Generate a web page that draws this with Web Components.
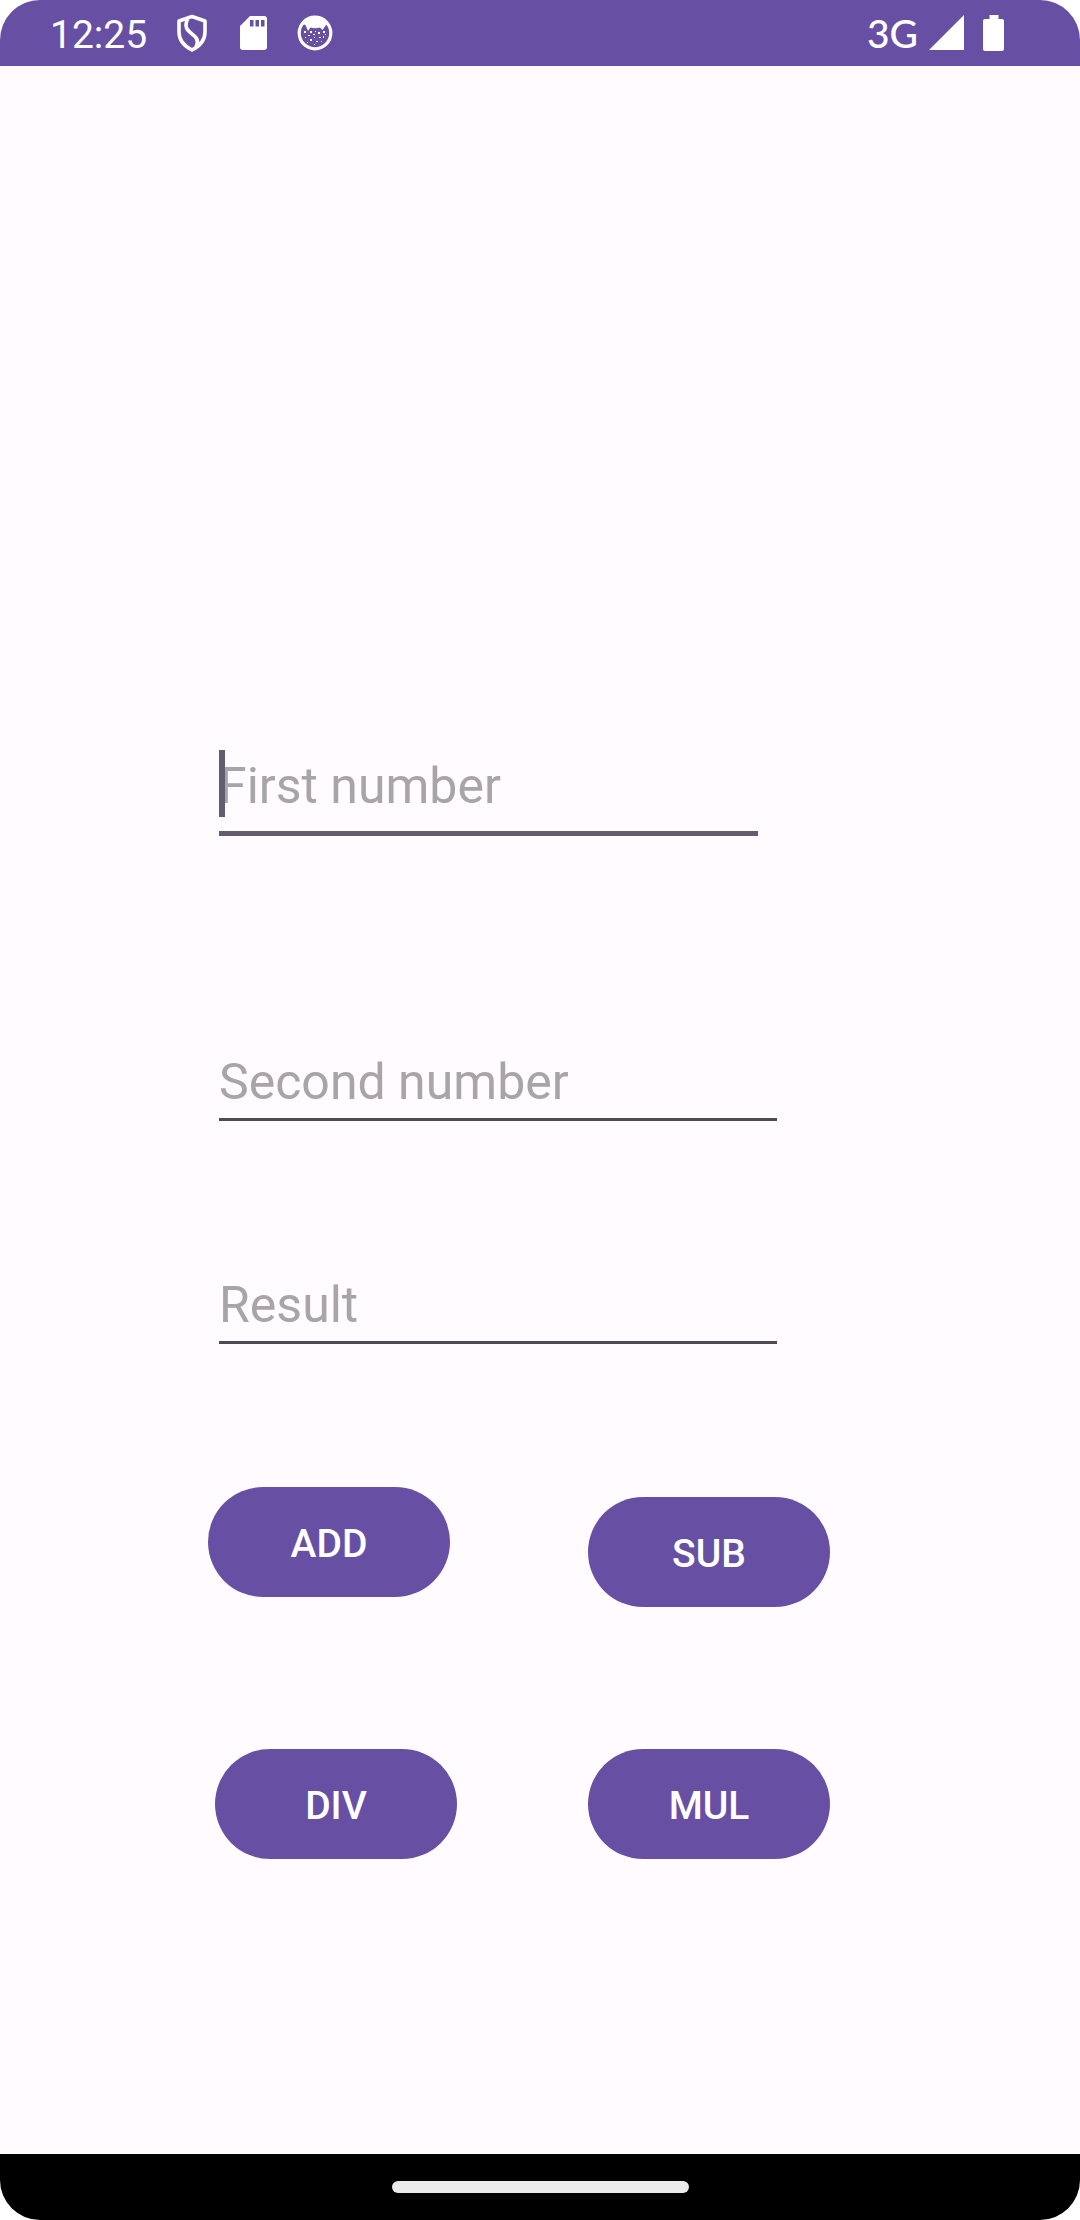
<!DOCTYPE html>
<html lang="en">
<head>
<meta charset="utf-8">
<meta name="viewport" content="width=device-width, initial-scale=1">
<title>Calculator</title>
<style>
  html { background: #fff; }
  body { margin: 0; font-family: Roboto, "Noto Sans", sans-serif; }
</style>
</head>
<body>
<calc-app></calc-app>

<script>
class StatusBar extends HTMLElement {
  constructor() {
    super();
    this.attachShadow({ mode: 'open' }).innerHTML = `
      <style>
        :host { display: flex; justify-content: space-between; align-items: center; height: 66px;
                box-sizing: border-box; padding: 0 76px 0 50px; background: #6750a4; color: #fff;
                font-size: 39px; line-height: 48px; }
        .group { display: flex; align-items: center; }
        svg { display: block; }
        .left svg { margin-left: 28px; }
        .time { padding-top: 4px; }
        .network { font-family: Lato, sans-serif; font-weight: 500; margin-right: 11px; }
        .right { margin-right: -2px; }
        .battery { margin-left: 18px; }
      </style>
      <div class="group left">
        <span class="time">12:25</span>
        <svg width="34" height="38" viewBox="0 0 34 38" fill="none" stroke="#fff" stroke-width="3.6" stroke-linejoin="round">
          <path d="M17 2.5 30 7v11c0 8-5 14-13 18C9 32 4 26 4 18V7Z"/>
          <path d="M12.500 5C9 13 12 16 17 20c6 4 7 8 4 13"/>
        </svg>
        <svg width="31" height="38" viewBox="0 0 31 38">
          <path fill="#fff" fill-rule="evenodd" d="M13 2h14q3 0 3 3v28q0 3-3 3H6q-3 0-3-3V12ZM13 6v6.500h3.500V6Zm5.500 0v6.500H22V6Zm5.500 0v6.500h3.500V6Z"/>
        </svg>
        <svg width="38" height="38" viewBox="0 0 38 38">
          <circle cx="19" cy="19" r="15.800" fill="none" stroke="#fff" stroke-width="3.200"/>
          <path fill="#fff" d="M6 10Q19-4 32 10L30 11 26.500 16 24 13.500Q19 15 14.500 13.500L12 17 9.500 11Z"/>
          <path fill="#fff" d="M8 17h2v2H8zM14 17h2v2h-2zM17 20h2v1h-2zM22 18h2v2h-2zM27 17h2v2h-2zM9 23h1v1H9zM12 21h2v1h-2zM14 25h2v2h-2zM18 23h1v1h-1zM20 27h2v1h-2zM23 23h2v1h-2zM27 22h1v2h-1zM25 27h1v1h-1zM18 30h1v1h-1zM11 28h1v1h-1zM29 20h1v1h-1zM19 17h1v1h-1z"/>
        </svg>
      </div>
      <div class="group right">
        <span class="network">3G</span>
        <svg width="35" height="36" viewBox="0 0 35 36"><path fill="#fff" d="M35 0v35H0Z"/></svg>
        <svg class="battery" width="24" height="38" viewBox="0 0 24 38">
          <path fill="#fff" d="M7.500 1h9v4H20q2 0 2 2v28q0 2-2 2H3q-2 0-2-2V7q0-2 2-2h4.500Z"/>
        </svg>
      </div>`;
  }
}
customElements.define('status-bar', StatusBar);

class NumberField extends HTMLElement {
  constructor() {
    super();
    this.attachShadow({ mode: 'open' }).innerHTML = `
      <style>
        :host { display: block; position: relative; box-sizing: border-box; width: 100%; max-width: 580px; padding: 0 11px; }
        :host([active]) { max-width: 561px; }
        input { display: block; box-sizing: content-box; width: 100%; height: 60px; margin: 0;
                padding: 0 0 6px; border: 0; border-bottom: 3px solid #4f4a58; border-radius: 0;
                outline: 0; background: none; color: #1c1b1f; caret-color: #625b71;
                font: 400 50px/60px Roboto, "Noto Sans", sans-serif; }
        input::placeholder { color: #a7a5a9; opacity: 1; }
        :host([active]) input { padding-bottom: 15px; border-bottom: 5px solid #625b71; }
        .cursor { display: none; position: absolute; left: 11px; top: -6px; width: 6px; height: 67px;
                  background: #625b71; pointer-events: none; }
        :host([active]) .cursor { display: block; }
      </style>
      <input type="text" inputmode="numeric">
      <span class="cursor"></span>`;
  }
  connectedCallback() {
    const input = this.shadowRoot.querySelector('input');
    input.placeholder = this.getAttribute('hint');
    input.setAttribute('aria-label', this.getAttribute('hint'));
  }
}
customElements.define('number-field', NumberField);

class PillButton extends HTMLElement {
  constructor() {
    super();
    this.attachShadow({ mode: 'open' }).innerHTML = `
      <style>
        :host { display: block; }
        button { display: block; width: 242px; height: 110px; margin: 0; padding: 4px 0 0; border: 0;
                 border-radius: 55px; background: #6750a4; color: #fff; cursor: pointer;
                 font: 500 39px/48px Roboto, "Noto Sans", sans-serif; }
      </style>
      <button type="button"><slot></slot></button>`;
  }
}
customElements.define('pill-button', PillButton);

class NavBar extends HTMLElement {
  constructor() {
    super();
    this.attachShadow({ mode: 'open' }).innerHTML = `
      <style>
        :host { display: flex; align-items: center; justify-content: center; height: 66px; background: #000; }
        div { width: 297px; height: 12px; border-radius: 6px; background: #ebebeb; }
      </style>
      <div></div>`;
  }
}
customElements.define('nav-bar', NavBar);

class CalcApp extends HTMLElement {
  constructor() {
    super();
    this.attachShadow({ mode: 'open' }).innerHTML = `
      <style>
        :host { display: flex; flex-direction: column; min-height: 100vh; overflow: hidden;
                border-radius: 40px; background: #fffbfe; }
        main { flex: 1; padding: 690px 250px 142px 208px; }
        .fields { display: flex; flex-direction: column; gap: 154px; margin-bottom: 143px; }
        .first { margin-bottom: 62px; }
        .keys { display: flex; flex-direction: column; gap: 142px; }
        .row { display: flex; justify-content: space-between; align-items: flex-start; }
        .lower { margin-top: 10px; }
        .inset { margin-left: 7px; }
      </style>
      <status-bar></status-bar>
      <main>
        <div class="fields">
          <number-field class="first" hint="First number" active></number-field>
          <number-field hint="Second number"></number-field>
          <number-field hint="Result"></number-field>
        </div>
        <div class="keys">
          <div class="row">
            <pill-button>ADD</pill-button>
            <pill-button class="lower">SUB</pill-button>
          </div>
          <div class="row">
            <pill-button class="inset">DIV</pill-button>
            <pill-button>MUL</pill-button>
          </div>
        </div>
      </main>
      <nav-bar></nav-bar>`;
  }
}
customElements.define('calc-app', CalcApp);
</script>
</body>
</html>
